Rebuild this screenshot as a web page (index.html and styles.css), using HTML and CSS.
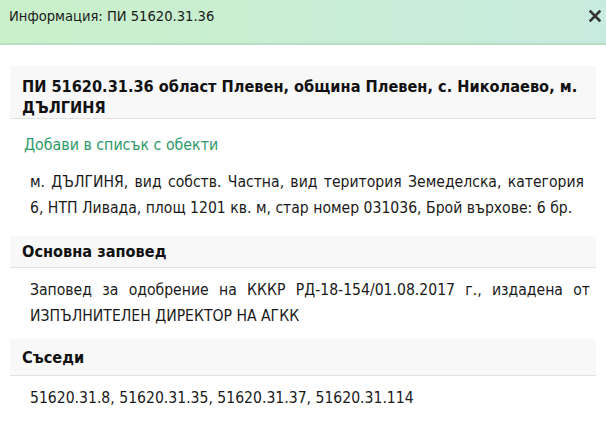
FILE: index.html
```
<!DOCTYPE html>
<html lang="bg">
<head>
<meta charset="utf-8">
<title>Информация</title>
<link rel="stylesheet" href="styles.css">
</head>
<body>
<div class="dialog">
  <div class="titlebar">
    <span class="title">Информация: ПИ 51620.31.36</span>
    <svg class="close" width="12" height="12" viewBox="0 0 12 12" aria-label="Затвори"><path d="M1.5 1.5 L10.5 10.5 M10.5 1.5 L1.5 10.5" stroke="#333" stroke-width="2.6" stroke-linecap="square" fill="none"/></svg>
  </div>
  <div class="content">
    <div class="sec-head sec-main">ПИ 51620.31.36 област Плевен, община Плевен, с. Николаево, м. ДЪЛГИНЯ</div>
    <a class="add-link" href="#">Добави в списък с обекти</a>
    <p class="text text-first">м. ДЪЛГИНЯ, вид собств. Частна, вид територия Земеделска, категория 6, НТП Ливада, площ 1201 кв. м, стар номер 031036, Брой върхове: 6 бр.</p>
    <div class="sec-head sec-order">Основна заповед</div>
    <p class="text">Заповед за одобрение на КККР РД-18-154/01.08.2017 г., издадена от ИЗПЪЛНИТЕЛЕН ДИРЕКТОР НА АГКК</p>
    <div class="sec-head sec-neigh">Съседи</div>
    <p class="text">51620.31.8, 51620.31.35, 51620.31.37, 51620.31.114</p>
  </div>
</div>
</body>
</html>
```
FILE: styles.css
```
html, body {
  margin: 0;
  padding: 0;
  background: #ffffff;
}
body {
  font-family: "DejaVu Sans Condensed", "DejaVu Sans", sans-serif;
  color: #111;
}
.dialog {
  width: 606px;
  height: 426px;
  overflow: hidden;
}
.titlebar {
  height: 45px;
  box-sizing: border-box;
  display: flex;
  justify-content: space-between;
  align-items: flex-start;
  padding: 7px 5px 0 9px;
  background: linear-gradient(to right, #c9f0c9, #c8ebdf);
  border-bottom: 2px solid #b9dcc4;
  font-size: 14.6px;
  color: #1a1a1a;
}
.title {
  line-height: 18px;
}
.close {
  margin-top: 3px;
}
.content {
  padding: 21px 10px 0 10px;
}
.sec-head {
  background: #f8f8f8;
  border-bottom: 1px solid #e2e2e2;
  font-weight: bold;
  font-size: 16.2px;
  line-height: 21px;
  padding: 5px 12px 5px 12px;
  color: #111;
}
.sec-main {
  padding: 10px 12px 0 12px;
}
.sec-neigh {
  padding: 8px 12px 7px 12px;
}
.add-link {
  display: block;
  color: #2e9a6c;
  text-decoration: none;
  font-size: 15.8px;
  line-height: 20px;
  margin: 16px 0 0 14px;
}
.text {
  margin: 9px 6px 10px 20px;
  font-size: 15.6px;
  line-height: 26px;
  text-align: justify;
  color: #1a1a1a;
}
.text-first {
  margin: 14px 12px 15px 20px;
}
```
